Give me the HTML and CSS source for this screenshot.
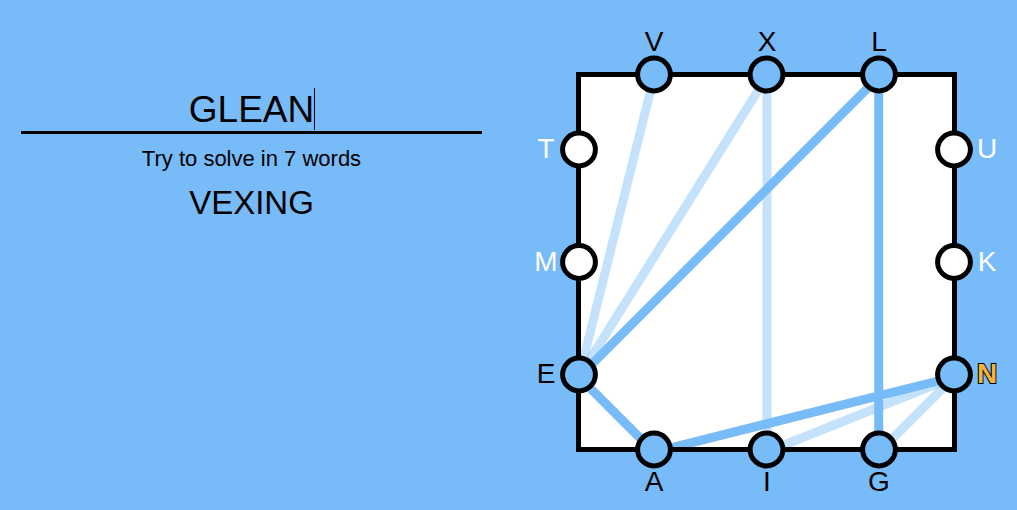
FILE: index.html
```html
<!DOCTYPE html>
<html lang="en">
<head>
<meta charset="utf-8">
<meta name="viewport" content="width=device-width, initial-scale=1">
<title>Letter puzzle</title>
<link rel="stylesheet" href="styles.css">
</head>
<body>
<main class="game">
  <section class="entry">
    <div class="field">
      <input class="word-input" type="text" value="GLEAN" aria-label="Current word" autocomplete="off" spellcheck="false">
      <span class="caret"></span>
    </div>
    <p class="hint">Try to solve in 7 words</p>
    <p class="found">VEXING</p>
  </section>
  <svg class="board" viewBox="0 0 493 510" role="img" aria-label="Letter board">
    <rect class="paper" x="54.5" y="74.5" width="376" height="375"/>
    <g class="past">
      <path d="M130 77L55 377"/>
      <path d="M55 377L242.5 77"/>
      <path d="M243 77V452"/>
      <path d="M242.5 452L430 377"/>
      <path d="M430 377L355 452"/>
    </g>
    <path class="current" d="M354.7 452V77L55 377L130 452L430 377"/>
    <rect class="frame" x="54.5" y="74.5" width="376" height="375"/>
    <g class="node used">
      <circle cx="130" cy="74.5" r="16.4"/>
      <circle cx="242.5" cy="74.5" r="16.4"/>
      <circle cx="355" cy="74.5" r="16.4"/>
      <circle cx="55" cy="374.5" r="16.4"/>
      <circle cx="430" cy="374.5" r="16.4"/>
      <circle cx="130" cy="449.5" r="16.4"/>
      <circle cx="242.5" cy="449.5" r="16.4"/>
      <circle cx="355" cy="449.5" r="16.4"/>
    </g>
    <g class="node">
      <circle cx="55" cy="149.5" r="16.4"/>
      <circle cx="55" cy="262" r="16.4"/>
      <circle cx="430" cy="149.5" r="16.4"/>
      <circle cx="430" cy="262" r="16.4"/>
    </g>
    <g class="letter">
      <text x="130" y="51">V</text>
      <text x="243" y="51">X</text>
      <text x="355" y="51">L</text>
      <text x="22" y="383">E</text>
      <text x="130" y="491">A</text>
      <text x="243" y="491">I</text>
      <text x="355" y="491">G</text>
    </g>
    <g class="letter unused">
      <text x="22" y="158">T</text>
      <text x="22" y="271">M</text>
      <text x="463" y="158">U</text>
      <text x="463" y="271">K</text>
    </g>
    <text class="letter active" x="463" y="383">N</text>
  </svg>
</main>
</body>
</html>
```
FILE: styles.css
```css
* {
  box-sizing: border-box;
}

body {
  margin: 0;
  background: #78bbf9;
  color: #000;
  font-family: "Liberation Sans", Arial, sans-serif;
}

.game {
  display: grid;
  grid-template-columns: minmax(0, 1fr) minmax(0, 493px);
}

.entry {
  padding: 88px 42px 0 21px;
  text-align: center;
}

.field {
  position: relative;
  border-bottom: 3px solid #000;
}

.word-input {
  display: block;
  width: 100%;
  height: 43px;
  padding: 0;
  border: 0;
  outline: 0;
  background: transparent;
  color: inherit;
  font: inherit;
  font-size: 37px;
  text-align: center;
}

.caret {
  position: absolute;
  top: 0;
  left: calc(50% + 62px);
  width: 1px;
  height: 42px;
  background: #000;
}

.hint {
  margin: 12px 0 0;
  font-size: 22px;
  line-height: 26px;
}

.found {
  margin: 12px 0 0;
  font-size: 33px;
  line-height: 38px;
}

.board {
  display: block;
  width: 100%;
  height: auto;
}

.paper {
  fill: #fff;
}

.past,
.current {
  fill: none;
  stroke: #78bbf9;
  stroke-width: 9;
}

.past path {
  stroke-opacity: 0.43;
}

.frame {
  fill: none;
  stroke: #000;
  stroke-width: 5;
}

.node {
  fill: #fff;
  stroke: #000;
  stroke-width: 5;
}

.used {
  fill: #78bbf9;
}

.letter {
  fill: #000;
  font-size: 28px;
  text-anchor: middle;
}

.unused {
  fill: #fff;
}

.active {
  fill: #f0b43c;
  stroke: #000;
  stroke-width: 2;
  paint-order: stroke;
  font-weight: bold;
}
```
